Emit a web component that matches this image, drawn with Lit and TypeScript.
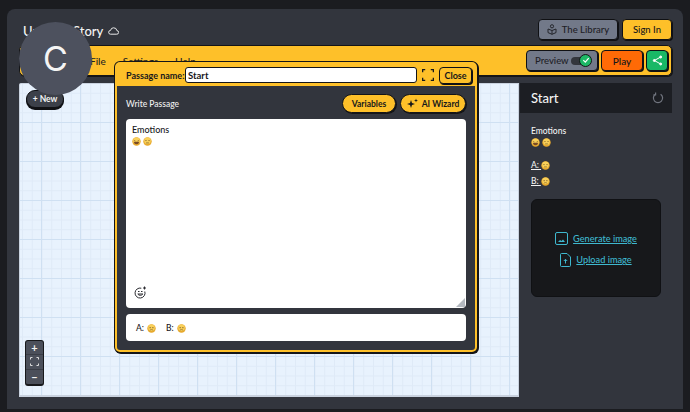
import { LitElement, html, css, svg } from "lit";
import { customElement } from "lit/decorators.js";

const face = (variant: "grin" | "flat" | "sad") => html`<svg class="emo" viewBox="0 0 16 16">
  <circle cx="8" cy="8" r="7.5" fill="#e8a92c"></circle>
  <circle cx="8" cy="6.8" r="5.8" fill="#f8d05a"></circle>
  ${variant === "grin"
    ? svg`<path d="M3.5 8.5h9a4.5 4.5 0 0 1-9 0z" fill="#7a4b24"/><path d="M4 6l2 1M12 6l-2 1" stroke="#6b4a20" stroke-width="1.2"/>`
    : variant === "flat"
    ? svg`<path d="M4 6.300h2.500M9.500 6.300H12M5.500 10.500h5" stroke="#7a5a22" stroke-width="1.200" fill="none"/>`
    : svg`<circle cx="5.500" cy="6.500" r="1" fill="#6b4a20"/><circle cx="10.500" cy="6.500" r="1" fill="#6b4a20"/><path d="M5 11.500c1.500-2 4.500-2 6 0" stroke="#7a5a22" stroke-width="1.200" fill="none"/>`}
</svg>`;

@customElement("app-root")
export class AppRoot extends LitElement {
  static styles = css`
    :host { display: block; width: 690px; height: 412px; overflow: hidden; font-family: "Lato", "Noto Sans", sans-serif; }
    * { box-sizing: border-box; }
    .page { position: relative; width: 690px; height: 412px; background: #1b1c20; padding: 9px 7px 3px 7px; }
    .panel { height: 400px; background: #32353d; border-radius: 8px 8px 0 0; padding: 10px 11px 12px 12px; display: flex; flex-direction: column; }
    .top { height: 21px; display: flex; align-items: center; justify-content: space-between; margin-bottom: 5px; }
    .title { display: flex; align-items: center; gap: 5px; color: #f4f4f4; font-size: 13px; font-weight: 500; padding: 2px 0 0 4px; }
    .top-actions { display: flex; gap: 4px; }
    .btn { display: flex; align-items: center; justify-content: center; border: 1.5px solid #101114; border-radius: 4px; font-size: 9.500px; font-weight: 500; color: #15161a; box-shadow: 1px 1px 0 #101114; }
    .lib { width: 80px; height: 21px; background: #727989; gap: 5px; color: #1e2026; }
    .sign { width: 50px; height: 21px; background: #fec029; }
    .bar { height: 31px; background: #fec029; border: 1.5px solid #141518; border-radius: 5px; display: flex; align-items: center; justify-content: space-between; padding: 0 3px 0 70px; box-shadow: 1px 1px 0 #141518; margin-bottom: 7px; }
    .menu { display: flex; gap: 17px; font-size: 10px; color: #222; font-weight: 500; }
    .bar-actions { display: flex; gap: 3px; }
    .preview { width: 72px; height: 21px; background: #727989; justify-content: space-between; padding: 0 6px 0 8px; color: #1e2026; }
    .play { width: 42px; height: 21px; background: #ff6a06; font-size: 10px; }
    .share { width: 22px; height: 21px; background: #19b866; }
    .switch { position: relative; width: 20px; height: 8px; border-radius: 4px; background: #33363d; }
    .knob { position: absolute; right: -1px; top: -3px; width: 13px; height: 13px; border-radius: 50%; background: #1db866; border: 1px solid #141518; display: flex; align-items: center; justify-content: center; }
    .main { flex: 1; display: flex; min-height: 0; gap: 1px; }
    .canvas { position: relative; width: 500px; border: 1px solid #c9d2df; border-radius: 2px 0 0 0; border-bottom-width: 2px; background-color: #e8f2fd;
      background-image:
        linear-gradient(#cfe0f2 1px, transparent 1px),
        linear-gradient(90deg, #cfe0f2 1px, transparent 1px),
        linear-gradient(#dfeaf7 1px, transparent 1px),
        linear-gradient(90deg, #dfeaf7 1px, transparent 1px);
      background-size: 39px 39px, 39px 39px, 9.75px 9.75px, 9.75px 9.75px;
      background-position: 0 -1px, 21px 0, 0 -1px, 2px 0; }
    .new { position: absolute; left: 6px; top: 6px; width: 38px; height: 18px; border-radius: 9px; background: #3c4049; border: 1.5px solid #101114; box-shadow: 0 2px 0 #101114; color: #f3f3f3; font-size: 8.5px; font-weight: 700; display: flex; align-items: center; justify-content: center; }
    .zoom { position: absolute; left: 5px; bottom: 9px; width: 19px; height: 46px; border-radius: 3px; background: #4b4f5a; border: 1px solid #17181b; border-bottom-width: 2px; display: grid; grid-template-rows: 1fr 1fr 1fr; color: #f0f0f0; font-size: 11px; font-weight: 700; }
    .zoom div { display: flex; align-items: center; justify-content: center; border-bottom: 1px solid #3a3d46; }
    .zoom div:last-child { border-bottom: 0; }
    .side { flex: 1; color: #f3f3f3; }
    .side-head { height: 30px; background: #1c1e23; display: flex; align-items: center; justify-content: space-between; padding: 0 8px 0 11px; font-size: 13px; font-weight: 500; }
    .side-body { padding: 13px 11px; font-size: 8.500px; font-weight: 500; }
    .side-body p { margin: 0; line-height: 11px; }
    .emo { width: 9px; height: 9px; vertical-align: -2px; margin-right: 2px; }
    .emos { margin-top: 0 !important; }
    .vote { margin-top: 5px !important; text-decoration: underline; }
    .vote.a { margin-top: 12px !important; }
    .img-box { margin-top: 12px; height: 98px; width: 130px; background: #17181b; border-radius: 6px; border: 1px solid #101114; display: flex; flex-direction: column; align-items: center; justify-content: center; gap: 8px; color: #3fb8cf; font-size: 9.200px; font-weight: 500; padding-top: 2px; }
    .img-box div { display: flex; align-items: center; gap: 5px; text-decoration: underline; }
    .avatar { position: absolute; left: 19px; top: 22px; width: 73px; height: 73px; border-radius: 50%; background: #4d515e; color: #f5f5f5; font-size: 34px; display: flex; align-items: center; justify-content: center; font-family: "Inter", sans-serif; font-weight: 400; }
    .modal { position: absolute; left: 115px; top: 62px; width: 362px; height: 290px; background: #32353d; border: 2px solid #fec029; border-radius: 5px; box-shadow: 0 0 0 1px #141518, 1px 1px 0 1px #141518; display: flex; flex-direction: column; }
    .m-head { height: 22px; background: #fec029; display: flex; align-items: center; padding: 0 3px 0 9px; font-size: 9px; font-weight: 700; color: #17181b; }
    .label { width: 59px; flex: none; white-space: nowrap; }
    .name { width: 232px; flex: none; height: 16px; background: #fff; border: 1.5px solid #141518; border-radius: 3px; display: flex; align-items: center; padding-left: 2px; font-size: 9.500px; }
    .fs { margin: 0 5px 0 5px; display: flex; }
    .close { width: 33px; height: 17px; flex: none; font-size: 9px; font-weight: 700; background: #fec029; }
    .m-body { flex: 1; display: flex; flex-direction: column; padding: 8px 9px; }
    .row { display: flex; align-items: center; justify-content: space-between; height: 19px; margin-bottom: 6px; color: #f0f0f0; font-size: 8.500px; font-weight: 500; }
    .row .btns { display: flex; gap: 4px; }
    .pill { height: 19px; border-radius: 10px; background: #fec029; border: 1.500px solid #141518; box-shadow: 1px 1px 0 #141518; color: #17181b; font-size: 8.500px; font-weight: 700; display: flex; align-items: center; justify-content: center; gap: 4px; }
    .vars { width: 54px; }
    .wiz { width: 66px; }
    .area { position: relative; height: 189px; background: #fff; border-radius: 4px; padding: 5px 6px; color: #17181b; font-size: 9px; font-weight: 500; margin-bottom: 6px; }
    .area p { margin: 0; line-height: 11px; }
    .add { position: absolute; left: 8px; bottom: 9px; }
    .grip { position: absolute; right: 1px; bottom: 1px; }
    .opts { height: 27px; background: #fff; border-radius: 4px; display: flex; align-items: center; gap: 10px; padding: 0 10px; color: #17181b; font-size: 8.500px; font-weight: 500; }
    .opts .emo { margin: 0 0 0 3px; }
  `;

  render() {
    return html`<div class="page">
      <div class="panel">
        <div class="top">
          <div class="title">Untitled Story
            <svg width="11" height="8" viewBox="0 0 11 8" fill="none" stroke="#e8e8e8" stroke-width="1"><path d="M2.500 7.200h6.200a1.800 1.800 0 0 0 .2-3.600A3.300 3.300 0 0 0 5.500.8a3 3 0 0 0-2.900 2.600 1.900 1.900 0 0 0-.1 3.800z"/></svg>
          </div>
          <div class="top-actions">
            <div class="btn lib">
              <svg width="10" height="11" viewBox="0 0 10 11" fill="none" stroke="#24262c" stroke-width="1"><circle cx="5" cy="2.300" r="1.600"/><path d="M1 5l4 1.500L9 5v3.600L5 10.300 1 8.600zM5 6.500v3.800"/></svg>
              The Library
            </div>
            <div class="btn sign">Sign In</div>
          </div>
        </div>
        <div class="bar">
          <div class="menu"><span>File</span><span>Settings</span><span>Help</span></div>
          <div class="bar-actions">
            <div class="btn preview">Preview
              <div class="switch"><div class="knob"><svg width="8" height="8" viewBox="0 0 8 8" fill="none" stroke="#fff" stroke-width="1.200"><path d="M1.300 4.200l2 2 3.400-4"/></svg></div></div>
            </div>
            <div class="btn play">Play</div>
            <div class="btn share">
              <svg width="11" height="11" viewBox="0 0 11 11" fill="#fff" stroke="#fff"><circle cx="8.700" cy="2" r="1"/><circle cx="2.300" cy="5.500" r="1"/><circle cx="8.700" cy="9" r="1"/><path d="M8.700 2L2.300 5.500l6.400 3.500" fill="none"/></svg>
            </div>
          </div>
        </div>
        <div class="main">
          <div class="canvas">
            <div class="new">+ New</div>
            <div class="zoom">
              <div>+</div>
              <div><svg width="9" height="9" viewBox="0 0 9 9" fill="none" stroke="#dedede"><path d="M.5 2.500v-2h2M6.500.5h2v2M8.500 6.500v2h-2M2.500 8.500h-2v-2"/></svg></div>
              <div>−</div>
            </div>
          </div>
          <div class="side">
            <div class="side-head">Start
              <svg width="12" height="12" viewBox="0 0 12 12" fill="none" stroke="#70747e" stroke-width="1.200"><path d="M3.400 2.200a4.600 4.600 0 1 0 5.200 0M3.600 0.600v2.200H1.400"/></svg>
            </div>
            <div class="side-body">
              <p>Emotions</p>
              <p class="emos">${face("grin")}${face("flat")}</p>
              <p class="vote a">A: ${face("flat")}</p>
              <p class="vote">B: ${face("sad")}</p>
              <div class="img-box">
                <div><svg width="13" height="13" viewBox="0 0 13 13" fill="none" stroke="#3fb8cf"><rect x=".5" y=".5" width="12" height="12" rx="1.500"/><path d="M3 10l2-2 1.500 1L8 7.500 10 10z" fill="#3fb8cf" stroke="none"/></svg>Generate image</div>
                <div><svg width="11" height="14" viewBox="0 0 11 14" fill="none" stroke="#3fb8cf"><path d="M.5 1.500a1 1 0 0 1 1-1h5.500l3.500 3.500v8.500a1 1 0 0 1-1 1h-8a1 1 0 0 1-1-1zM5.500 10.500v-4M3.800 8l1.700-1.700L7.200 8"/></svg>Upload image</div>
              </div>
            </div>
          </div>
        </div>
      </div>

      <div class="avatar">C</div>

      <div class="modal">
        <div class="m-head"><span class="label">Passage name:</span>
          <div class="name">Start</div>
          <div class="fs"><svg width="12" height="12" viewBox="0 0 13 13" fill="none" stroke="#17181b" stroke-width="1.400"><path d="M.7 3.500V.7h2.800M9.500.7h2.800v2.800M12.300 9.500v2.800H9.500M3.500 12.300H.7V9.500"/></svg></div>
          <div class="btn close">Close</div>
        </div>
        <div class="m-body">
          <div class="row">Write Passage
            <div class="btns">
              <div class="pill vars">Variables</div>
              <div class="pill wiz">
                <svg width="11" height="11" viewBox="0 0 11 11" fill="#17181b"><path d="M4 2l1 3 3 1-3 1-1 3-1-3-3-1 3-1zM9 .5l.5 1.500 1.500.5-1.500.5L9 4.500 8.500 3 7 2.500 8.500 2z"/></svg>
                AI Wizard
              </div>
            </div>
          </div>
          <div class="area">
            <p>Emotions</p>
            <p>${face("grin")}${face("flat")}</p>
            <svg class="add" width="13" height="13" viewBox="0 0 13 13" fill="none" stroke="#2a2b30" stroke-width="1"><path d="M10.800 5.500a5 5 0 1 1-3.500-3.300"/><path d="M3.800 8a3 3 0 0 0 5 0zM4 5.500h1.500M7 5.500h1.500M10.500.5v3M9 2h3"/></svg>
            <svg class="grip" width="9" height="9" viewBox="0 0 9 9" fill="#b4b9c0"><path d="M9 0v9H0z"/></svg>
          </div>
          <div class="opts"><span>A:${face("sad")}</span><span>B:${face("sad")}</span></div>
        </div>
      </div>
    </div>`;
  }
}
